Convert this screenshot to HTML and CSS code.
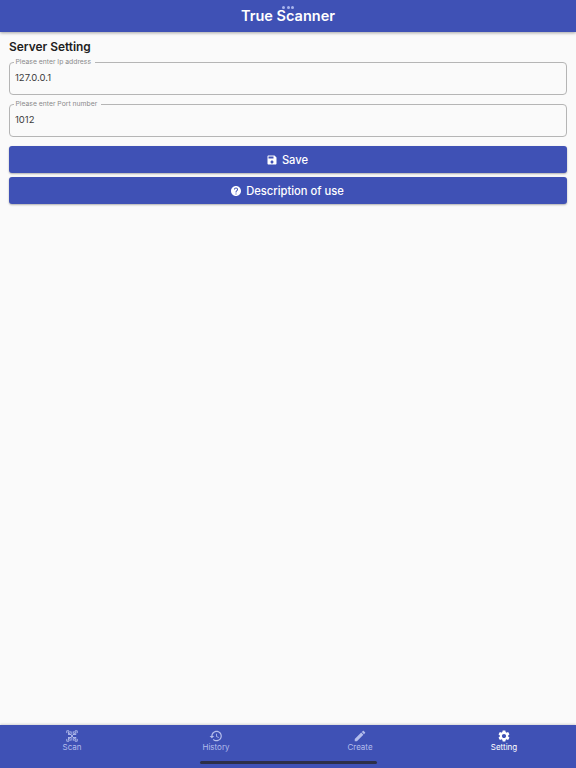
FILE: index.html
```html
<!DOCTYPE html>
<html lang="en">
<head>
    <meta charset="UTF-8">
    <title>True Scanner</title>
    <link rel="stylesheet" href="styles.css">
</head>
<body>
    <div class="app">
        <header class="appbar">
            <div class="dots"><span></span><span></span><span></span></div>
            <h1>True Scanner</h1>
        </header>

        <main class="content">
            <h2>Server Setting</h2>

            <fieldset class="field">
                <legend>Please enter Ip address</legend>
                <input type="text" value="127.0.0.1">
            </fieldset>

            <fieldset class="field">
                <legend>Please enter Port number</legend>
                <input type="text" value="1012">
            </fieldset>

            <button class="btn save-btn">
                <svg viewBox="0 0 24 24"><path d="M17 3H5c-1.11 0-2 .9-2 2v14c0 1.1.89 2 2 2h14c1.1 0 2-.9 2-2V7l-4-4zm-5 16c-1.66 0-3-1.34-3-3s1.34-3 3-3 3 1.34 3 3-1.34 3-3 3zm3-10H5V5h10v4z"/></svg>
                Save
            </button>
            <button class="btn">
                <svg viewBox="0 0 24 24"><path d="M12 2C6.48 2 2 6.48 2 12s4.48 10 10 10 10-4.48 10-10S17.52 2 12 2zm1 17h-2v-2h2v2zm2.07-7.75l-.9.92C13.45 12.9 13 13.5 13 15h-2v-.5c0-1.1.45-2.1 1.17-2.83l1.24-1.26c.37-.36.59-.86.59-1.41 0-1.1-.9-2-2-2s-2 .9-2 2H8c0-2.21 1.79-4 4-4s4 1.79 4 4c0 .88-.36 1.68-.93 2.25z"/></svg>
                Description of use
            </button>
        </main>

        <nav class="tabbar">
            <div class="tab">
                <svg class="scan-icon" viewBox="0 0 24 24">
                    <path d="M3 7V3h4M17 3h4v4M3 17v4h4M21 17v4h-4M7 7l10 10M17 7L7 17"/>
                    <rect x="6" y="5" width="4.5" height="4.5"/>
                    <rect x="14" y="5" width="4.5" height="4.5"/>
                    <rect x="6" y="14.5" width="4.5" height="4.5"/>
                    <rect x="14" y="14.5" width="4.5" height="4.5"/>
                </svg>
                <span>Scan</span>
            </div>
            <div class="tab">
                <svg viewBox="0 0 24 24"><path d="M13 3c-4.97 0-9 4.03-9 9H1l3.89 3.89.07.14L9 12H6c0-3.87 3.13-7 7-7s7 3.13 7 7-3.13 7-7 7c-1.93 0-3.68-.79-4.94-2.06l-1.42 1.42C8.27 19.99 10.51 21 13 21c4.97 0 9-4.03 9-9s-4.03-9-9-9zm-1 5v5l4.28 2.54.72-1.21-3.5-2.08V8H12z"/></svg>
                <span>History</span>
            </div>
            <div class="tab">
                <svg viewBox="0 0 24 24"><path d="M3 17.25V21h3.75L17.81 9.94l-3.75-3.75L3 17.25zM20.71 7.04c.39-.39.39-1.02 0-1.41l-2.34-2.34c-.39-.39-1.02-.39-1.41 0l-1.83 1.83 3.75 3.75 1.83-1.83z"/></svg>
                <span>Create</span>
            </div>
            <div class="tab active">
                <svg viewBox="0 0 24 24"><path d="M19.14 12.94c.04-.3.06-.61.06-.94 0-.32-.02-.64-.07-.94l2.03-1.58c.18-.14.23-.41.12-.61l-1.92-3.32c-.12-.22-.37-.29-.59-.22l-2.39.96c-.5-.38-1.03-.7-1.62-.94l-.36-2.54c-.04-.24-.24-.41-.48-.41h-3.84c-.24 0-.43.17-.47.41l-.36 2.54c-.59.24-1.13.57-1.62.94l-2.39-.96c-.22-.08-.47 0-.59.22L2.74 8.87c-.12.21-.08.47.12.61l2.03 1.58c-.05.3-.09.63-.09.94s.02.64.07.94l-2.03 1.58c-.18.14-.23.41-.12.61l1.92 3.32c.12.22.37.29.59.22l2.39-.96c.5.38 1.03.7 1.62.94l.36 2.54c.05.24.24.41.48.41h3.84c.24 0 .44-.17.47-.41l.36-2.54c.59-.24 1.13-.56 1.62-.94l2.39.96c.22.08.47 0 .59-.22l1.92-3.32c.12-.22.07-.47-.12-.61l-2.01-1.58zM12 15.6c-1.98 0-3.6-1.62-3.6-3.6s1.62-3.6 3.6-3.6 3.6 1.62 3.6 3.6-1.62 3.6-3.6 3.6z"/></svg>
                <span>Setting</span>
            </div>
            <div class="home-bar"></div>
        </nav>
    </div>
</body>
</html>
```

FILE: styles.css
```css
* {
    box-sizing: border-box;
}
html, body {
    margin: 0;
    height: 100%;
}
body {
    font-family: Inter, "Noto Sans", sans-serif;
    background-color: #fafafa;
    color: #212121;
}
.app {
    height: 768px;
    display: flex;
    flex-direction: column;
    overflow: hidden;
}
.appbar {
    position: relative;
    height: 32px;
    flex: none;
    background: #3f51b5;
    box-shadow: 0 1px 3px rgba(0,0,0,0.35);
    text-align: center;
}
.appbar h1 {
    margin: 0;
    padding-top: 7px;
    font-size: 14.5px;
    line-height: 18px;
    font-weight: 600;
    color: #fff;
}
.dots {
    position: absolute;
    top: 6px;
    left: 0;
    right: 0;
    display: flex;
    justify-content: center;
    gap: 1.5px;
}
.dots span {
    width: 3px;
    height: 3px;
    border-radius: 50%;
    background: #a9b4ec;
}
.content {
    flex: 1;
    padding: 0 9px;
}
.content h2 {
    margin: 7px 0 3px;
    font-size: 11.9px;
    line-height: 15px;
    font-weight: 600;
    color: #212121;
}
.field {
    margin: 0 0 4px;
    padding: 0 5px;
    height: 38px;
    border: 1px solid #b5b5b5;
    border-radius: 4px;
}
.field legend {
    margin-left: -1.5px;
    padding: 0 4px 0 2px;
    font-size: 6.8px;
    line-height: 10px;
    color: #8a8a8a;
}
.field input {
    display: block;
    width: 100%;
    margin-top: 4px;
    padding: 0;
    border: none;
    outline: none;
    background: transparent;
    font-family: inherit;
    font-size: 9.5px;
    line-height: 14px;
    color: #3c3c3c;
}
.btn {
    display: flex;
    align-items: center;
    justify-content: center;
    gap: 4px;
    width: 100%;
    height: 27px;
    margin: 0 0 4px;
    padding: 0 2px 0 0;
    border: none;
    border-radius: 3px;
    background: #3f51b5;
    box-shadow: 0 1px 2px rgba(0,0,0,0.3);
    color: #fff;
    font-family: inherit;
    font-size: 11.2px;
    font-weight: 500;
}
.btn svg {
    width: 12px;
    height: 12px;
    fill: #fff;
}
.save-btn {
    margin-top: 9px;
}
.tabbar {
    position: relative;
    flex: none;
    height: 43px;
    display: flex;
    background: #3f51b5;
    box-shadow: 0 -1px 2px rgba(0,0,0,0.15);
}
.tab {
    flex: 1;
    display: flex;
    flex-direction: column;
    align-items: center;
    padding-top: 4px;
    color: #b4bdec;
    font-size: 8px;
    line-height: 9px;
}
.tab svg {
    width: 14px;
    height: 14px;
    fill: #b4bdec;
}
.tab .scan-icon {
    fill: none;
    stroke: #b4bdec;
    stroke-width: 1.5;
}
.tab.active {
    color: #fff;
}
.tab.active svg {
    fill: #fff;
}
.home-bar {
    position: absolute;
    left: 200px;
    bottom: 4px;
    width: 177px;
    height: 3px;
    border-radius: 2px;
    background: #2c2f48;
}
```
